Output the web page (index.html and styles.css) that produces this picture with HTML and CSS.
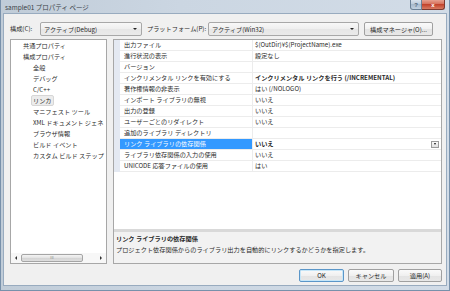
FILE: index.html
```html
<!DOCTYPE html>
<html lang="ja">
<head>
<meta charset="utf-8">
<title>sample01 プロパティ ページ</title>
<link rel="stylesheet" href="styles.css">
</head>
<body>
<div class="window">
  <div class="titlebar">
    <span class="title">sample01 プロパティ ページ</span>
    <div class="caption">
      <span class="cap cap-help">?</span>
      <span class="cap cap-close">x</span>
    </div>
  </div>
  <div class="client">
    <div class="toolbar">
      <span class="lbl lbl-config">構成(C):</span>
      <div class="combo combo-config"><span class="combo-text">アクティブ(Debug)</span><i class="arrow"></i></div>
      <span class="lbl lbl-platform">プラットフォーム(P):</span>
      <div class="combo combo-platform"><span class="combo-text">アクティブ(Win32)</span><i class="arrow"></i></div>
      <button class="btn btn-manager">構成マネージャ(O)...</button>
    </div>
    <div class="main">
      <div class="tree">
        <ul class="tree-list">
          <li class="lv1">共通プロパティ</li>
          <li class="lv1">構成プロパティ</li>
          <li class="lv2">全般</li>
          <li class="lv2">デバッグ</li>
          <li class="lv2">C/C++</li>
          <li class="lv2"><span class="sel">リンカ</span></li>
          <li class="lv2">マニフェスト ツール</li>
          <li class="lv2">XML ドキュメント ジェネ</li>
          <li class="lv2">ブラウザ情報</li>
          <li class="lv2">ビルド イベント</li>
          <li class="lv2">カスタム ビルド ステップ</li>
        </ul>
        <div class="hscroll">
          <span class="sb-arrow sb-left"></span>
          <span class="sb-thumb"><span class="grip">III</span></span>
          <span class="sb-arrow sb-right"></span>
        </div>
      </div>
      <div class="props">
        <div class="grid">
          <div class="rows">
            <div class="row"><span class="name">出力ファイル</span><span class="value">$(OutDir)¥$(ProjectName).exe</span></div>
            <div class="row"><span class="name">進行状況の表示</span><span class="value">設定なし</span></div>
            <div class="row"><span class="name">バージョン</span><span class="value"></span></div>
            <div class="row"><span class="name">インクリメンタル リンクを有効にする</span><span class="value bold">インクリメンタル リンクを行う (/INCREMENTAL)</span></div>
            <div class="row"><span class="name">著作権情報の非表示</span><span class="value">はい (/NOLOGO)</span></div>
            <div class="row"><span class="name">インポート ライブラリの無視</span><span class="value">いいえ</span></div>
            <div class="row"><span class="name">出力の登録</span><span class="value">いいえ</span></div>
            <div class="row"><span class="name">ユーザーごとのリダイレクト</span><span class="value">いいえ</span></div>
            <div class="row"><span class="name">追加のライブラリ ディレクトリ</span><span class="value"></span></div>
            <div class="row row-selected"><span class="name">リンク ライブラリの依存関係</span><span class="value bold">いいえ<i class="dd"></i></span></div>
            <div class="row"><span class="name">ライブラリ依存関係の入力の使用</span><span class="value">いいえ</span></div>
            <div class="row"><span class="name">UNICODE 応答ファイルの使用</span><span class="value">はい</span></div>
          </div>
        </div>
        <div class="splitter"></div>
        <div class="desc">
          <div class="desc-title">リンク ライブラリの依存関係</div>
          <div class="desc-text">プロジェクト依存関係からのライブラリ出力を自動的にリンクするかどうかを指定します。</div>
        </div>
      </div>
    </div>
    <div class="buttons">
      <button class="btn btn-ok">OK</button>
      <button class="btn btn-cancel">キャンセル</button>
      <button class="btn btn-apply">適用(A)</button>
    </div>
  </div>
</div>
</body>
</html>
```
FILE: styles.css
```css
* { box-sizing: border-box; }
html, body { margin: 0; padding: 0; }
body {
  width: 450px;
  height: 291px;
  overflow: hidden;
  font-family: "Noto Sans CJK JP", "Liberation Sans", sans-serif;
  font-size: 6.2px;
  color: #2a2a2a;
  background: #c9d7e6;
}
.window {
  width: 450px;
  height: 291px;
  display: flex;
  flex-direction: column;
  background: linear-gradient(90deg, #c0ccd8 0%, #cbd6e2 40%, #d2dce7 100%);
  border: 1px solid #7891ab;
  border-top: none;
}
.titlebar {
  height: 14px;
  display: flex;
  align-items: flex-start;
  justify-content: space-between;
  padding-left: 4px;
  flex: none;
}
.title {
  font-size: 6.5px;
  line-height: 14px;
  color: #3a3f46;
}
.caption {
  display: flex;
  margin-right: 4px;
}
.cap {
  height: 10px;
  display: flex;
  align-items: center;
  justify-content: center;
  font-family: "Liberation Sans", sans-serif;
  font-weight: bold;
  font-size: 6px;
  color: #fff;
  border: 1px solid #6a8096;
  border-top: none;
}
.cap-help {
  width: 12px;
  background: linear-gradient(#d9e3ee, #b8c9da 50%, #a7bacd 50%, #c2d2e2);
  border-radius: 0 0 0 3px;
  color: #55677a;
}
.cap-close {
  width: 23px;
  background: linear-gradient(#e6a08f, #d46a54 50%, #c2432c 50%, #d87b62);
  border-left: none;
  border-radius: 0 0 3px 0;
  border-color: #7d3a30;
}
.client {
  flex: 1;
  margin: 0 3px 5px 3px;
  background: #f0f0f0;
  box-shadow: 0 0 0 1px #98abbf;
  padding: 8px 4px 3px 6px;
  display: flex;
  flex-direction: column;
}
.toolbar {
  height: 14px;
  display: flex;
  align-items: center;
  flex: none;
}
.lbl { line-height: 14px; white-space: nowrap; }
.lbl-config { width: 30px; }
.lbl-platform { width: 61px; margin-left: 5px; }
.combo {
  height: 14px;
  border: 1px solid #a8a8a8;
  border-radius: 2px;
  background: linear-gradient(#f8f8f8, #efefef 50%, #e6e6e6 50%, #eaeaea);
  display: flex;
  align-items: center;
  padding-left: 3px;
}
.combo-config { width: 102px; }
.combo-platform { width: 151px; }
.combo-text { flex: 1; white-space: nowrap; color: #2a2a2a; }
.arrow {
  width: 0; height: 0;
  border-left: 2px solid transparent;
  border-right: 2px solid transparent;
  border-top: 2px solid #222;
  margin-right: 4px;
}
.btn {
  font-family: inherit;
  font-size: 6.2px;
  color: #2a2a2a;
  height: 13px;
  padding: 0;
  border: 1px solid #a0a0a0;
  border-radius: 2px;
  background: linear-gradient(#fafafa, #f0f0f0 50%, #e3e3e3 50%, #e8e8e8);
  line-height: 11px;
  white-space: nowrap;
}
.btn-manager { width: 69px; height: 14px; margin-left: 5px; }
.main {
  height: 225px;
  margin-top: 3px;
  display: flex;
  gap: 6px;
  flex: none;
}
.tree {
  width: 97px;
  background: #fff;
  border: 1px solid #a7a7a7;
  display: flex;
  flex-direction: column;
  overflow: hidden;
}
.tree-list {
  list-style: none;
  margin: 0;
  padding: 0;
  flex: 1;
}
.tree-list li {
  height: 11px;
  line-height: 11px;
  white-space: nowrap;
  overflow: hidden;
}
.lv1 { padding-left: 12px; }
.lv2 { padding-left: 22px; }
.sel {
  display: inline-block;
  background: #ececec;
  border: 1px solid #d6d6d6;
  border-radius: 2px;
  padding: 0 1px;
  line-height: 9px;
  margin-left: -2px;
}
.hscroll {
  height: 10px;
  display: flex;
  align-items: center;
  background: #f7f7f7;
  flex: none;
  padding: 0 1px 1px 1px;
}
.sb-arrow {
  width: 8px;
  display: flex;
  justify-content: center;
}
.sb-left::before {
  content: "";
  border-top: 2px solid transparent;
  border-bottom: 2px solid transparent;
  border-right: 2px solid #333;
}
.sb-right::before {
  content: "";
  border-top: 2px solid transparent;
  border-bottom: 2px solid transparent;
  border-left: 2px solid #333;
}
.sb-thumb {
  width: 62px;
  height: 8px;
  margin-left: 1px;
  border: 1px solid #a5a5a5;
  border-radius: 2px;
  background: linear-gradient(#f4f4f4, #e2e2e2 50%, #d4d4d4 50%, #dedede);
  display: flex;
  align-items: center;
  justify-content: center;
  font-size: 4px;
  color: #888;
  line-height: 6px;
}
.grip { font-family: "Liberation Sans", sans-serif; }
.sb-right { margin-left: auto; }
.props {
  flex: 1;
  border: 1px solid #a7a7a7;
  display: flex;
  flex-direction: column;
  background: #fff;
}
.grid {
  flex: 1;
  background: #fff;
}
.rows {
  border-left: 6px solid #e4e9f2;
}
.row {
  height: 11px;
  display: flex;
  border-bottom: 1px solid #ececec;
  line-height: 10px;
}
.name {
  width: 133px;
  padding-left: 4px;
  border-right: 1px solid #ececec;
  white-space: nowrap;
  overflow: hidden;
  flex: none;
}
.value {
  flex: 1;
  padding-left: 2px;
  white-space: nowrap;
  display: flex;
  align-items: center;
}
.bold { font-weight: bold; }
.row-selected .name {
  background: #3399ff;
  color: #fff;
}
.dd {
  margin-left: auto;
  margin-right: 2px;
  width: 8px;
  height: 7px;
  border: 1px solid #9a9a9a;
  background: linear-gradient(#fafafa, #e0e0e0);
  display: flex;
  align-items: center;
  justify-content: center;
}
.dd::before {
  content: "";
  border-left: 1.5px solid transparent;
  border-right: 1.5px solid transparent;
  border-top: 2px solid #111;
}
.splitter {
  height: 3px;
  background: #d9d9d9;
  flex: none;
}
.desc {
  height: 31px;
  background: #f2f2f2;
  padding: 1px 2px 0 2px;
  flex: none;
}
.desc-title, .desc-text {
  line-height: 11px;
  white-space: nowrap;
}
.desc-title { font-weight: bold; }
.buttons {
  margin-top: 5px;
  display: flex;
  justify-content: flex-end;
  gap: 4px;
  flex: none;
}
.btn-ok {
  width: 45px;
  border-color: #5b96c8;
  box-shadow: inset 0 0 0 1px #c6e6f8;
}
.btn-cancel { width: 46px; }
.btn-apply { width: 44px; }
```
